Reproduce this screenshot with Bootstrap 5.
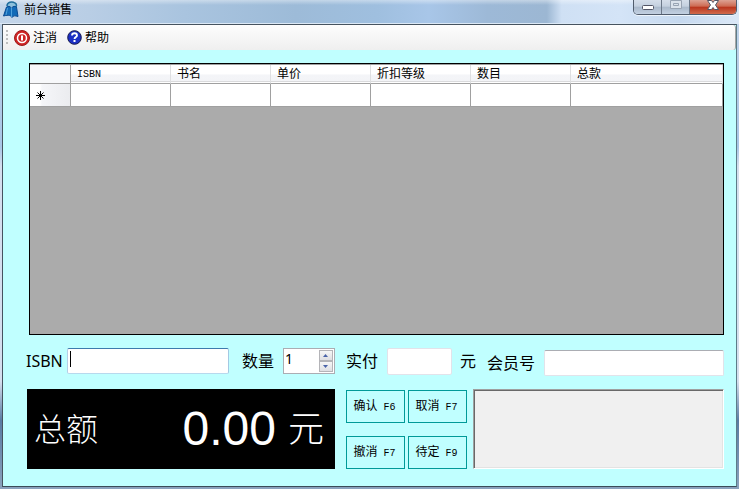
<!DOCTYPE html>
<html lang="zh-CN">
<head>
<meta charset="utf-8">
<meta name="viewport" content="width=device-width, initial-scale=1">
<title>前台销售</title>
<link href="https://cdn.jsdelivr.net/npm/bootstrap@5.3.0/dist/css/bootstrap.min.css" rel="stylesheet">
<style>
  body {
    font-family: "Noto Sans", "Noto Sans CJK SC", sans-serif;
    font-size: 12px;
    line-height: 16px;
    color: #000;
    background: #a9c3de;
  }
  .app-window {
    padding: 0 2px 2px 2px;
    background: linear-gradient(180deg, #c4d6ea 0, #a9c6e6 30%, #d5dfee 34%, #d5dfee 78%, #5a7ca3 86%, #8ba2bd 100%);
  }
  .title-bar {
    height: 24px;
    margin: 0 -2px;
    padding: 0 2px;
    border-bottom: 1px solid #dce9f6;
    background:
      linear-gradient(180deg, rgba(255,255,255,.4) 0, rgba(255,255,255,0) 5px),
      linear-gradient(90deg, #c3d5e9 0, #b9cee5 12%, #a9c4df 25%, #9dbbd8 40%, #9fbfdf 51%, #a8c6e8 58%, #9db9d7 66%, #9cb7d3 74%, #cfe0f4 76%, #d4e4f7 84%, #c6d9ef 92%, #dbe8f7 100%);
  }
  .title-bar h1 { font-size: 12px; line-height: 19px; padding-left: 5px; }
  .win-buttons {
    height: 15px;
    border: 1px solid #515c6c;
    border-top: 0;
    border-radius: 0 0 5px 5px;
    box-shadow: 0 1px 0 #eef5fc;
    overflow: hidden;
  }
  .win-buttons button {
    display: flex;
    justify-content: center;
    border: 0;
    border-right: 1px solid #6b7788;
    padding: 0;
    width: 28px;
    background: linear-gradient(180deg, #d5deea 0, #c4d0df 45%, #a9b8ca 50%, #c3d1e2 100%);
  }
  .win-buttons .btn-shut {
    width: 46px;
    border-right: 0;
    background: linear-gradient(180deg, #dda293 0, #cd6a52 45%, #b9341c 50%, #d06a4c 100%);
  }
  .client-area { border: 1px solid #46535f; border-color: #46535f #5d7c88 #3b4b58 #46535f; background: #c0ffff; }
  .tool-strip {
    height: 25px;
    padding-left: 3px;
    background: linear-gradient(180deg, #fdfdfd, #efefef);
    border-right: 1px solid #a5a5a5;
    border-radius: 0 3px 3px 0;
  }
  .tool-strip button { display: flex; align-items: center; gap: 3px; border: 0; padding: 0; background: none; color: #000; margin-left: 6px; }
  .tool-strip button + button { margin-left: 10px; }
  .grip { width: 2px; height: 15px; background: repeating-linear-gradient(180deg, #bdbdbd 0 2px, transparent 2px 4px); }
  .main-panel { padding: 13px 12px 17px 23px; gap: 13px; }
  .data-pane { background: #ababab; border: 1px solid #000; margin-left: 3px; }
  .data-grid { width: 100%; table-layout: fixed; border-collapse: separate; border-spacing: 0; border-top: 1px solid #a0a0a0; }
  .data-grid .col-head { width: 41px; }
  .data-grid .col-data { width: 100px; }
  .data-grid th { font-weight: 400; }
  .data-grid thead th {
    height: 19px;
    padding: 0 6px;
    line-height: 16px;
    border-bottom: 1px solid #a0a0a0;
    border-right: 1px solid #dedfe1;
    background: linear-gradient(180deg, #fff 0 50%, #f4f5f8 55%, #f3f4f7 88%, #d8d8da 92%, #fff 95%);
  }
  .data-grid thead th:first-child { background: #f7f8fa; border-right-color: #a0a0a0; }
  .data-grid tbody > tr > * { height: 23px; padding: 0 6px; background: #fff; border-right: 1px solid #a0a0a0; border-bottom: 1px solid #a0a0a0; }
  .data-grid tbody th { background: linear-gradient(90deg, #fff 0 25%, #f5f6f9 30%, #ebecef 100%); line-height: 0; }
  .latin { font-family: "Liberation Mono", monospace; font-size: 10px; white-space: pre; }
  .entry-row { font-size: 16px; line-height: 26px; height: 28px; white-space: nowrap; }
  .entry-row input { height: 26px; padding: 0 3px; font-size: 16px; line-height: 20px; color: #000; background: #fff; border: 1px solid #e2e3ea; border-top-color: #abadb3; border-radius: 2px; outline: 0; min-width: 0; }
  .entry-row .isbn-box { width: 0; border-color: #3d7bad #a4c9e3 #b7d9ed #b5cfe7; margin: 0 13px 0 4px; caret-color: transparent; background: linear-gradient(#000, #000) 2px 2px / 1px 16px no-repeat #fff; }
  .entry-row .paid-box { width: 65px; height: 27px; margin: 0 8px 0 9px; border-color: #e2e3ea; }
  .entry-row .member-box { width: 180px; margin-left: 9px; }
  .member-field { padding-top: 2px; margin-left: 11px; }
  .spinner { width: 52px; height: 26px; border: 1px solid #abadb3; background: #fff; margin: 0 11px 0 9px; padding: 1px; }
  .entry-row .spinner input { width: 0; border: 0; height: 18px; padding: 0; font-family: "Noto Sans", sans-serif; font-size: 14px; appearance: textfield; -moz-appearance: textfield; }
  .spinner input::-webkit-inner-spin-button { appearance: none; margin: 0; }
  .spinner button { width: 14px; height: 11px; padding: 0; border: 1px solid #b4b4b8; display: flex; align-items: center; justify-content: center; background: linear-gradient(180deg, #f6f6f6, #dedfe3); }
  .total-box { background: #000; color: #fff; padding: 0 11px 0 7px; margin-left: 1px; width: 308px; }
  .total-name { font-size: 32px; line-height: 80px; font-weight: 300; }
  .total-value { font-family: "Liberation Sans", sans-serif; font-size: 48px; line-height: 80px; }
  .total-unit { font-size: 36px; line-height: 80px; font-weight: 300; margin-left: 12px; }
  .action-keys { display: grid; grid-template-columns: 59px 59px; grid-template-rows: 33px 33px; row-gap: 13px; column-gap: 3px; padding-top: 1px; margin: 0 6px 0 11px; }
  .action-keys button { border: 1px solid #009a98; border-radius: 0; padding: 0 2px 0 0; background: #c0ffff; color: #000; font-size: 12px; line-height: 16px; }
  .info-panel { background: #f0f0f0; border: 1px solid; border-color: #a0a0a0 #fff #fff #a0a0a0; box-shadow: inset 1px 1px 0 #696969, inset -1px -1px 0 #e3e3e3; }
</style>
<script src="https://cdn.jsdelivr.net/npm/bootstrap@5.3.0/dist/js/bootstrap.bundle.min.js" defer></script>
</head>
<body>
<div class="app-window d-flex flex-column min-vh-100">
  <header class="title-bar d-flex align-items-start">
    <svg width="17" height="19" viewBox="0 0 17 19" aria-hidden="true">
      <path d="M5 6C5 2 10 1 13 3c2 1 2 3 0 5" fill="#8cc0dc" stroke="#1f6d9c" stroke-width="1.500"/>
      <path d="M1.500 16L4.500 7c2-1 3-1 5 1 2-2 3-2 5-1l1.500 9.500c-3-1-5-1-6 1-1-2-3-3-8.500-1.500z" fill="#126bb8" stroke="#0a4a92"/>
      <path d="M9.500 8v9M5.500 8L4 15" stroke="#4fa1dc" fill="none"/>
    </svg>
    <h1 class="mb-0 fw-normal flex-grow-1">前台销售</h1>
    <div class="win-buttons d-flex flex-shrink-0">
      <button type="button" aria-label="最小化"><svg width="14" height="14" viewBox="0 0 14 14"><rect x="1.500" y="5.500" width="11" height="4" rx="1" fill="#fff" stroke="#535666"/></svg></button>
      <button type="button" aria-label="最大化" disabled><svg width="14" height="14" viewBox="0 0 14 14"><path d="M1.500 .5h11v8h-11zM4.500 3.500h5v2h-5z" fill="#dbe2eb" stroke="#98a3b2"/></svg></button>
      <button type="button" class="btn-shut" aria-label="关闭"><svg width="14" height="14" viewBox="0 0 14 14"><path d="M1.500 .5h4L7 2.500 8.500 .5h4L9.500 5l3 4.500h-4L7 7.500 5.500 9.500h-4L4.500 5z" fill="#fff" stroke="#535666"/></svg></button>
    </div>
  </header>

  <div class="client-area d-flex flex-column flex-grow-1">
    <nav class="tool-strip d-flex align-items-center" aria-label="工具栏">
      <span class="grip"></span>
      <button type="button">
        <svg width="16" height="16" viewBox="0 0 16 16" aria-hidden="true">
          <circle cx="8" cy="8" r="7.500" fill="#cf2424" stroke="#9d1a1a"/>
          <circle cx="8" cy="8" r="4.500" fill="none" stroke="#fff" stroke-width="1.500"/>
          <path d="M8 5.500v5" stroke="#fff" stroke-width="2"/>
        </svg>注消
      </button>
      <button type="button">
        <svg width="15" height="15" viewBox="0 0 15 15" aria-hidden="true">
          <circle cx="7.500" cy="7.500" r="6.800" fill="#1c2fc4" stroke="#14184e"/>
          <path d="M5 5.500c0-3 5-3 5 0C10 7 7.500 7 7.500 9" fill="none" stroke="#fff" stroke-width="1.800"/>
          <rect x="6.500" y="10" width="2" height="2" fill="#fff"/>
        </svg>帮助
      </button>
    </nav>

    <main class="main-panel d-flex flex-column flex-grow-1">
      <div class="data-pane flex-grow-1">
        <table class="data-grid">
          <colgroup><col class="col-head"><col class="col-data"><col class="col-data"><col class="col-data"><col class="col-data"><col class="col-data"><col></colgroup>
          <thead>
            <tr><th></th><th scope="col"><span class="latin">ISBN</span></th><th scope="col">书名</th><th scope="col">单价</th><th scope="col">折扣等级</th><th scope="col">数目</th><th scope="col">总款</th></tr>
          </thead>
          <tbody>
            <tr><th scope="row" aria-label="新行"><svg width="9" height="9" viewBox="0 0 9 9"><path d="M4.500 0v9M0 4.500h9M1.500 1.500l6 6M7.500 1.500l-6 6" stroke="#000"/></svg></th><td></td><td></td><td></td><td></td><td></td><td></td></tr>
          </tbody>
        </table>
      </div>

      <form class="entry-row d-flex align-items-start">
        <label for="isbn">ISBN</label>
        <input id="isbn" type="text" class="isbn-box flex-grow-1" autofocus>
        <label for="qty">数量</label>
        <div class="spinner d-flex flex-shrink-0">
          <input id="qty" type="number" value="1" class="flex-grow-1">
          <div class="d-flex flex-column flex-shrink-0">
            <button type="button" aria-label="增加"><svg width="5" height="3" viewBox="0 0 5 3"><path d="M0 3L2.500 0 5 3z" fill="#4a63a8"/></svg></button>
            <button type="button" aria-label="减少"><svg width="5" height="3" viewBox="0 0 5 3"><path d="M0 0h5L2.500 3z" fill="#4a63a8"/></svg></button>
          </div>
        </div>
        <label for="paid">实付</label>
        <input id="paid" type="text" class="paid-box flex-shrink-0">
        <span>元</span>
        <div class="member-field d-flex flex-shrink-0">
          <label for="member">会员号</label>
          <input id="member" type="text" class="member-box">
        </div>
      </form>

      <section class="d-flex">
        <div class="total-box d-flex">
          <span class="total-name me-auto">总额</span>
          <span class="total-value">0.00</span>
          <span class="total-unit">元</span>
        </div>
        <div class="action-keys">
          <button type="button">确认<span class="latin"> F6</span></button>
          <button type="button">取消<span class="latin"> F7</span></button>
          <button type="button">撤消<span class="latin"> F7</span></button>
          <button type="button">待定<span class="latin"> F9</span></button>
        </div>
        <div class="info-panel flex-grow-1"></div>
      </section>
    </main>
  </div>
</div>
</body>
</html>
